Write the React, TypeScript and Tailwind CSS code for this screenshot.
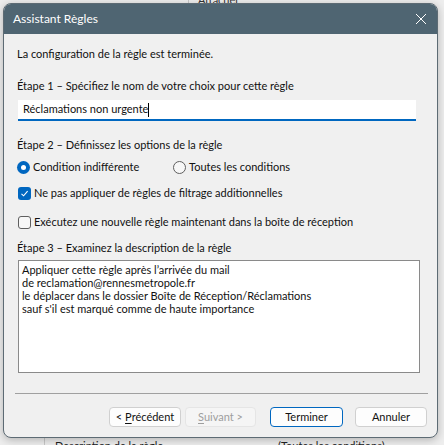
import React from "react";

const font = { fontFamily: '"Segoe UI", Lato, sans-serif' };

function Radio({ checked, label }: { checked?: boolean; label: string }) {
  return (
    <div className="flex items-center h-4">
      {checked ? (
        <span className="w-[13px] h-[13px] rounded-full bg-[#0067c0] flex items-center justify-center">
          <span className="w-[5px] h-[5px] rounded-full bg-white" />
        </span>
      ) : (
        <span className="w-[13px] h-[13px] rounded-full border border-[#5f5f5f] bg-[#f7f7f7]" />
      )}
      <span className="ml-[3px]">{label}</span>
    </div>
  );
}

function Check({ checked, label }: { checked?: boolean; label: string }) {
  return (
    <div className="flex items-center h-4 ml-px">
      {checked ? (
        <span className="w-[13px] h-[13px] rounded-[3px] bg-[#0067c0] flex items-center justify-center">
          <svg width="9" height="9" viewBox="0 0 9 9" fill="none">
            <path d="M1.5 4.8 L3.6 6.8 L7.6 2.2" stroke="white" strokeWidth="1.1" />
          </svg>
        </span>
      ) : (
        <span className="w-[13px] h-[13px] rounded-[3px] border border-[#5f5f5f] bg-[#f7f7f7]" />
      )}
      <span className="ml-[3px]">{label}</span>
    </div>
  );
}

export default function App() {
  return (
    <div
      className="relative w-[444px] h-[445px] bg-[#eeeeee] overflow-hidden text-[11px] text-[#111]"
      style={font}
    >
      {/* fenêtre derrière */}
      <div className="absolute left-[188px] top-0 w-px h-[6px] bg-[#c8c8c8]" />
      <div className="absolute left-[198px] top-[-8px] text-[#333]">Attacher</div>
      <div className="absolute left-[44px] top-[436px] w-px h-[9px] bg-[#c8c8c8]" />
      <div className="absolute left-[55px] top-[438px] text-[#222]">Description de la règle</div>
      <div className="absolute left-[278px] top-[438px] text-[#222]">(Toutes les conditions)</div>

      {/* DIALOGUE */}
      <div className="relative z-10 ml-[3px] mt-[3px] w-[435px] h-[435px] rounded-lg border border-[#5d6b74] bg-[#f0f0f0] overflow-hidden shadow-[0_2px_8px_rgba(0,0,0,0.25)] flex flex-col">
        <div className="h-[30px] bg-[#4f6572] flex items-center justify-between pl-[9px] pr-[8px] text-white text-[12px]">
          <span>Assistant Règles</span>
          <svg width="12" height="12" viewBox="0 0 12 12" className="mr-[2px]">
            <path d="M1 1 L11 11 M11 1 L1 11" stroke="white" strokeWidth="1" />
          </svg>
        </div>

        <div className="flex flex-col pl-[13px]">
          <div className="mt-[12px] h-4 leading-4">La configuration de la règle est terminée.</div>

          <div className="mt-[16px] h-4 leading-4">Étape 1 – Spécifiez le nom de votre choix pour cette règle</div>
          <div className="mt-[6px] ml-px w-[398px] h-[21px] bg-white border-b-2 border-[#0067c0] flex items-center pl-[5px]">
            <span>Réclamations non urgente</span>
            <span className="w-px h-[14px] bg-black" />
          </div>

          <div className="mt-[16px] h-4 leading-4">Étape 2 – Définissez les options de la règle</div>
          <div className="mt-[6px] flex">
            <div className="w-[156px]">
              <Radio checked label="Condition indifférente" />
            </div>
            <Radio label="Toutes les conditions" />
          </div>
          <div className="mt-[10px]">
            <Check checked label="Ne pas appliquer de règles de filtrage additionnelles" />
          </div>
          <div className="mt-[13px]">
            <Check label="Exécutez une nouvelle règle maintenant dans la boîte de réception" />
          </div>

          <div className="mt-[10px] h-4 leading-4">Étape 3 – Examinez la description de la règle</div>
          <div className="mt-[4px] ml-px w-[402px] h-[113px] bg-white border border-[#8a8a8a] pl-[3px] pt-[2px] leading-[13px]">
            <div>Appliquer cette règle après l’arrivée du mail</div>
            <div>de reclamation@rennesmetropole.fr</div>
            <div>le déplacer dans le dossier Boîte de Réception/Réclamations</div>
            <div>sauf s'il est marqué comme de haute importance</div>
          </div>
        </div>

        <div className="mt-[20px] ml-[11px] w-[413px] h-px bg-[#a0a0a0]" />

        <div className="mt-[13px] flex pl-[105px]">
          <button className="w-[72px] h-[20px] rounded-[4px] border border-[#d0d0d0] bg-[#fdfdfd] text-[#111] flex items-center justify-center">
            &lt;&nbsp;<span className="underline underline-offset-2">P</span>récédent
          </button>
          <button className="ml-[4px] w-[71px] h-[20px] rounded-[4px] border border-[#e5e5e5] bg-[#f5f5f5] text-[#9e9e9e] flex items-center justify-center">
            <span className="underline underline-offset-2">S</span>uivant &gt;
          </button>
          <button className="ml-[14px] w-[73px] h-[20px] rounded-[4px] border border-[#0067c0] bg-[#fdfdfd] text-[#111] flex items-center justify-center">
            Terminer
          </button>
          <button className="ml-[12px] w-[72px] h-[20px] rounded-[4px] border border-[#d0d0d0] bg-[#fdfdfd] text-[#111] flex items-center justify-center">
            Annuler
          </button>
        </div>
      </div>
    </div>
  );
}
